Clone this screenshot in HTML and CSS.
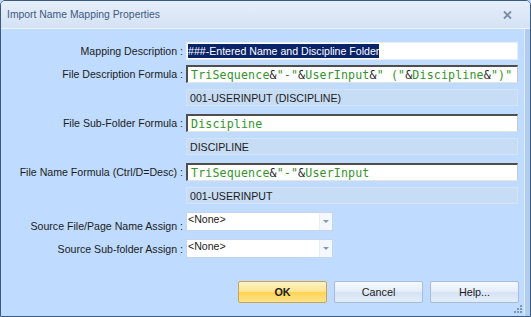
FILE: index.html
```html
<!DOCTYPE html>
<html lang="en">
<head>
    <meta charset="UTF-8">
    <title>Import Name Mapping Properties</title>
    <link rel="stylesheet" href="styles.css">
</head>
<body>
    <div class="window">
        <div class="titlebar">
            <span class="title">Import Name Mapping Properties</span>
            <svg class="close" width="11" height="10" viewBox="0 0 11 10">
                <path d="M2 1.5 L9 8.5 M9 1.5 L2 8.5" stroke="#7a8ca6" stroke-width="1.8" fill="none"/>
            </svg>
        </div>
        <div class="client">
            <div class="panel">
                <div class="form">
                    <div class="row first">
                        <label>Mapping Description :</label>
                        <div class="field plain"><span class="sel">###-Entered Name and Discipline Folder</span></div>
                    </div>
                    <div class="row">
                        <label>File Description Formula :</label>
                        <div class="field formula"><span class="g">TriSequence</span><span class="op">&amp;</span><span class="g">"-"</span><span class="op">&amp;</span><span class="g">UserInput</span><span class="op">&amp;</span><span class="g">" ("</span><span class="op">&amp;</span><span class="g">Discipline</span><span class="op">&amp;</span><span class="g">")"</span></div>
                    </div>
                    <div class="row near">
                        <span class="spacer"></span>
                        <div class="preview">001-USERINPUT (DISCIPLINE)</div>
                    </div>
                    <div class="row">
                        <label>File Sub-Folder Formula :</label>
                        <div class="field formula"><span class="g">Discipline</span></div>
                    </div>
                    <div class="row near">
                        <span class="spacer"></span>
                        <div class="preview">DISCIPLINE</div>
                    </div>
                    <div class="row">
                        <label>File Name Formula (Ctrl/D=Desc) :</label>
                        <div class="field formula"><span class="g">TriSequence</span><span class="op">&amp;</span><span class="g">"-"</span><span class="op">&amp;</span><span class="g">UserInput</span></div>
                    </div>
                    <div class="row near">
                        <span class="spacer"></span>
                        <div class="preview">001-USERINPUT</div>
                    </div>
                    <div class="row combo-row low">
                        <label>Source File/Page Name Assign :</label>
                        <div class="combo"><span class="value">&lt;None&gt;</span><span class="drop"><i></i></span></div>
                    </div>
                    <div class="row combo-row">
                        <label>Source Sub-folder Assign :</label>
                        <div class="combo"><span class="value">&lt;None&gt;</span><span class="drop"><i></i></span></div>
                    </div>
                </div>
                <div class="buttons">
                    <button class="btn ok">OK</button>
                    <button class="btn">Cancel</button>
                    <button class="btn">Help...</button>
                </div>
                <svg class="grip" width="9" height="9" viewBox="0 0 9 9">
                    <rect x="6" y="0" width="2" height="2" fill="#7c95b8"/>
                    <rect x="3" y="3" width="2" height="2" fill="#7c95b8"/>
                    <rect x="6" y="3" width="2" height="2" fill="#7c95b8"/>
                    <rect x="0" y="6" width="2" height="2" fill="#7c95b8"/>
                    <rect x="3" y="6" width="2" height="2" fill="#7c95b8"/>
                    <rect x="6" y="6" width="2" height="2" fill="#7c95b8"/>
                </svg>
            </div>
            <div class="frame"></div>
        </div>
    </div>
</body>
</html>
```

FILE: styles.css
```css
* {
    box-sizing: border-box;
}
body {
    margin: 0;
    background: #bfdbff;
    font-family: "Liberation Sans", Arial, sans-serif;
    font-size: 10.6px;
    color: #1b1b1b;
}
.window {
    width: 531px;
    height: 317px;
    border: 1px solid #3b5a82;
    border-radius: 5px 5px 0 0;
    background: #bfdbff;
    display: flex;
    flex-direction: column;
    overflow: hidden;
}
.titlebar {
    height: 28px;
    flex: none;
    background: linear-gradient(#e6eefa, #d4e2f4);
    border-bottom: 1px solid #eef4fc;
    display: flex;
    align-items: center;
    justify-content: space-between;
    padding: 0 17px 0 6px;
}
.title {
    font-size: 10.4px;
    color: #3e5a84;
}
.client {
    flex: 1;
    display: flex;
}
.panel {
    flex: 1;
    position: relative;
    border-right: 1px solid #dfeafa;
    display: flex;
    flex-direction: column;
}
.frame {
    width: 5px;
    background: #b2ccee;
}
.form {
    padding-top: 13px;
    display: flex;
    flex-direction: column;
}
.row {
    display: flex;
    align-items: center;
    margin-top: 8px;
}
.row.first {
    margin-top: 0;
}
.row.near {
    margin-top: 6px;
}
.row label, .spacer {
    width: 183px;
    flex: none;
    text-align: right;
    padding-right: 1px;
}
.field {
    width: 332px;
    margin-left: 2px;
    height: 18px;
    background: #fff;
    display: flex;
    align-items: center;
    white-space: nowrap;
    overflow: hidden;
}
.row.first + .row {
    margin-top: 5px;
}
.plain {
    border: 1px solid #e6eef8;
    padding-left: 1px;
}
.sel {
    background: #0a246a;
    color: #fff;
    line-height: 14px;
}
.formula {
    border-top: 2px solid #4e4e4e;
    border-left: 2px solid #4e4e4e;
    border-right: 1px solid #c8c8c8;
    border-bottom: 1px solid #e4e4e4;
    padding-left: 3px;
    font-family: "DejaVu Sans Mono", "Liberation Mono", monospace;
    font-size: 11.6px;
    letter-spacing: 0.16px;
}
.g {
    color: #34942a;
}
.op {
    color: #202020;
}
.preview {
    width: 332px;
    margin-left: 2px;
    height: 17px;
    background: #c7dcf5;
    border: 1px solid #d4e3f7;
    padding-left: 3px;
    display: flex;
    align-items: center;
}
.combo-row.low label {
    position: relative;
    top: 4px;
}
.combo {
    width: 147px;
    margin-left: 2px;
    height: 19px;
    background: #fff;
    border: 1px solid #c4d6ee;
    display: flex;
}
.combo .value {
    flex: 1;
    padding-left: 1px;
    line-height: 13px;
}
.drop {
    width: 13px;
    border-left: 1px solid #e6eef8;
    background: #f4f8fd;
    display: flex;
    align-items: center;
    justify-content: center;
}
.drop i {
    width: 0;
    height: 0;
    border-left: 3px solid transparent;
    border-right: 3px solid transparent;
    border-top: 3px solid #8797ad;
}
.buttons {
    display: flex;
    justify-content: flex-end;
    gap: 7px;
    padding-right: 5px;
    margin-top: 23px;
}
.btn {
    width: 89px;
    height: 22px;
    font-family: "Liberation Sans", Arial, sans-serif;
    font-size: 10.8px;
    color: #1b1b1b;
    border: 1px solid #a7bcd9;
    border-radius: 2px;
    background: linear-gradient(#f6f9fe, #e4edf9 50%, #d6e3f4 51%, #e3ecf8);
    padding: 0;
}
.btn.ok {
    font-weight: bold;
    border-color: #c6a55a;
    background: linear-gradient(#fff3c4, #ffe38f 50%, #ffd354 51%, #ffe28a);
}
.grip {
    position: absolute;
    right: 1px;
    bottom: 2px;
}
```
